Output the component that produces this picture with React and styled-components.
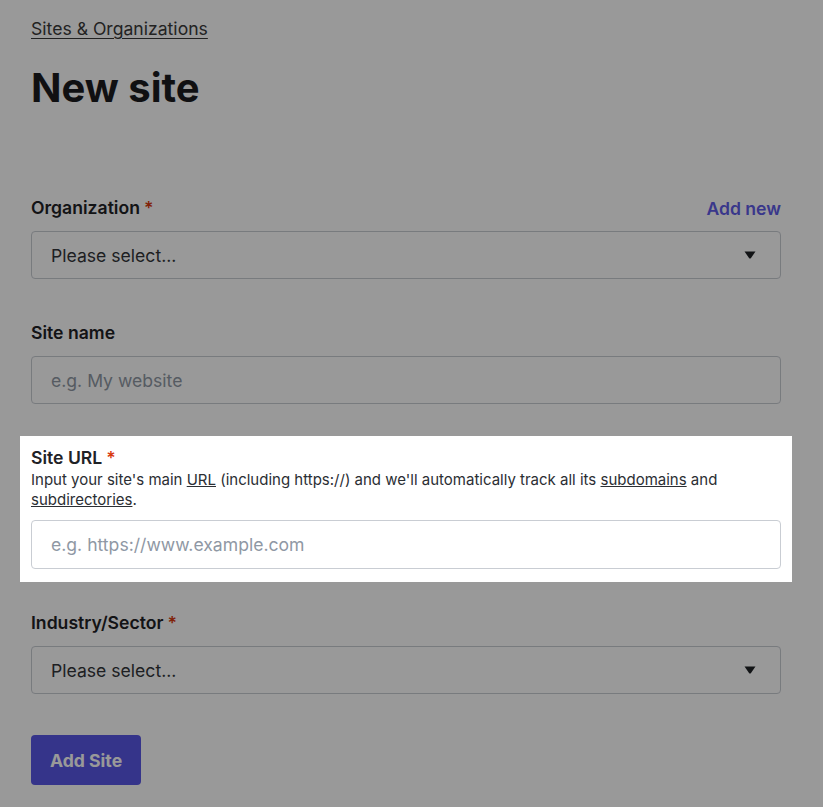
import React from 'react';
import styled, { createGlobalStyle } from 'styled-components';

const GlobalStyle = createGlobalStyle`
  html, body {
    margin: 0;
    background: #ffffff;
    font-family: Inter, "Noto Sans", sans-serif;
    color: #1f2226;
  }
`;

const Page = styled.div`
  width: 750px;
  padding: 17px 31px 40px;
`;

const Crumb = styled.a`
  display: inline-block;
  font-size: 17.6px;
  line-height: 24px;
  color: #3a3a3a;
  text-decoration: underline;
  text-underline-offset: 3px;
`;

const Title = styled.h1`
  margin: 23px 0 84px;
  font-size: 40px;
  line-height: 48px;
  font-weight: 700;
  color: #1c1c1e;
`;

const Form = styled.form`
  display: flex;
  flex-direction: column;
  gap: 42px;
`;

const Field = styled.div`
  display: flex;
  flex-direction: column;
`;

// spotlight around the field the tour is pointing at
const Spotlight = styled(Field)`
  position: relative;
  z-index: 1;
  margin: -10px -11px -13px;
  padding: 10px 11px 13px;
  background: #ffffff;
  box-shadow: 0 0 0 9999px rgba(0, 0, 0, 0.4);
`;

const LabelRow = styled.div`
  display: flex;
  justify-content: space-between;
  align-items: center;
  margin-bottom: ${(p) => (p.$tight ? '0' : '11px')};
`;

const Label = styled.label`
  font-size: 17.6px;
  line-height: 24px;
  font-weight: 600;
  color: #1f2226;
`;

const Req = styled.span`
  color: #d83a10;
  margin-left: 4px;
`;

const AddLink = styled.a`
  font-size: 17.6px;
  font-weight: 600;
  color: #5f5ce8;
  text-decoration: none;
`;

const Help = styled.p`
  margin: 0 0 10px;
  font-size: 15px;
  line-height: 20px;
  color: #2b2e33;

  a {
    color: inherit;
    text-decoration: underline;
  }
`;

const Select = styled.div`
  box-sizing: border-box;
  height: 48px;
  display: flex;
  align-items: center;
  justify-content: space-between;
  padding: 0 24px 0 19px;
  border: 1px solid #c9cdd3;
  border-radius: 4px;
  font-size: 17.6px;
  color: #333539;
  background: #ffffff;
`;

const Input = styled.input`
  box-sizing: border-box;
  height: ${(p) => (p.$tall ? '49px' : '48px')};
  width: 100%;
  padding: 0 19px;
  border: 1px solid #c9cdd3;
  border-radius: 4px;
  font-family: inherit;
  font-size: 17.6px;
  color: #1f2226;
  background: #ffffff;
  outline: none;

  &::placeholder {
    color: #8f98a4;
  }
`;

const Button = styled.button`
  align-self: flex-start;
  margin-top: -1px;
  height: 50px;
  padding: 0 19px;
  border: none;
  border-radius: 4px;
  background: #5957e6;
  color: #ffffff;
  font-family: inherit;
  font-size: 17.6px;
  font-weight: 700;
`;

const Caret = () => (
  <svg width="12" height="8" viewBox="0 0 12 8">
    <path d="M0.5 0.5 H11.5 L6.8 7.2 Q6 8 5.2 7.2 Z" fill="#1f2226" />
  </svg>
);

export default function App() {
  return (
    <Page>
      <GlobalStyle />
      <Crumb href="#">Sites &amp; Organizations</Crumb>
      <Title>New site</Title>
      <Form onSubmit={(e) => e.preventDefault()}>
        <Field>
          <LabelRow>
            <Label>
              Organization<Req>*</Req>
            </Label>
            <AddLink href="#">Add new</AddLink>
          </LabelRow>
          <Select>
            Please select...
            <Caret />
          </Select>
        </Field>

        <Field>
          <LabelRow>
            <Label>Site name</Label>
          </LabelRow>
          <Input placeholder="e.g. My website" />
        </Field>

        <Spotlight>
          <LabelRow $tight>
            <Label>
              Site URL<Req>*</Req>
            </Label>
          </LabelRow>
          <Help>
            Input your site's main <a href="#">URL</a> (including https://) and we'll
            automatically track all its <a href="#">subdomains</a> and{' '}
            <a href="#">subdirectories</a>.
          </Help>
          <Input $tall placeholder="e.g. https://www.example.com" />
        </Spotlight>

        <Field>
          <LabelRow>
            <Label>
              Industry/Sector<Req>*</Req>
            </Label>
          </LabelRow>
          <Select>
            Please select...
            <Caret />
          </Select>
        </Field>

        <Button type="submit">Add Site</Button>
      </Form>
    </Page>
  );
}
